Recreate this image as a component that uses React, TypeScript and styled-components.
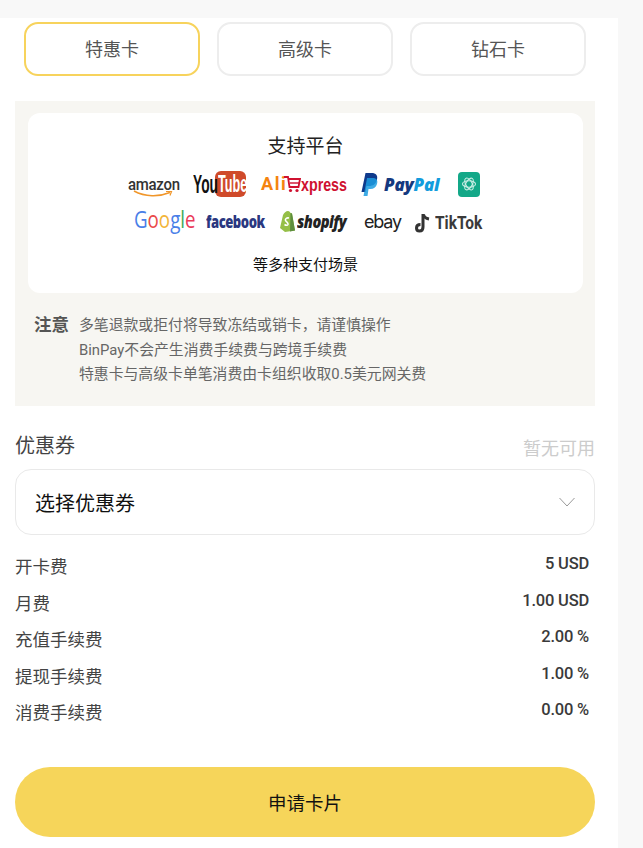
import React, { FC } from 'react';
import styled, { createGlobalStyle } from 'styled-components';

const cjk = '"Noto Sans CJK SC", "Noto Sans", sans-serif';

const GlobalStyle = createGlobalStyle`
    html, body {
        margin: 0;
        padding: 0;
        background: #f8f8f8;
        font-family: ${cjk};
    }
`;

const Page = styled.div`
    width: 618px;
    min-height: 848px;
    background: #fff;
`;

const TopBand = styled.div`
    width: 643px;
    height: 18px;
    background: #f8f8f8;
    overflow: hidden;
    text-align: center;
    padding-right: 18px;
    box-sizing: border-box;
`;

const TopTitle = styled.div`
    font-size: 18px;
    line-height: 24px;
    margin-top: -22px;
    color: #999;
`;

const Tabs = styled.div`
    display: flex;
    gap: 17px;
    padding: 4px 0 0 24px;
`;

const Tab = styled.div<{ $active?: boolean }>`
    width: 176px;
    height: 54px;
    box-sizing: border-box;
    padding-bottom: 2px;
    border: 2px solid ${p => (p.$active ? '#f7d35c' : '#ededed')};
    border-radius: 14px;
    display: flex;
    align-items: center;
    justify-content: center;
    font-size: 18px;
    color: #555;
`;

const Notice = styled.div`
    width: 580px;
    height: 305px;
    box-sizing: border-box;
    margin: 25px 0 0 15px;
    padding: 12px 12px 0 13px;
    background: #f7f6f2;
`;

const PlatformCard = styled.div`
    height: 180px;
    box-sizing: border-box;
    padding-top: 18px;
    background: #fff;
    border-radius: 12px;
    text-align: center;
`;

const PlatformTitle = styled.div`
    font-size: 19px;
    line-height: 28px;
    color: #222;
`;

const LogoRow = styled.div<{ $top: number; $shiftLeft?: number; $shiftRight?: number }>`
    display: flex;
    align-items: center;
    justify-content: center;
    height: 26px;
    margin-top: ${p => p.$top}px;
    padding-left: ${p => p.$shiftLeft ?? 0}px;
    padding-right: ${p => p.$shiftRight ?? 0}px;
`;

const Logo = styled.div<{ $left?: number; $width: number; $drop?: number }>`
    position: relative;
    display: flex;
    align-items: center;
    flex: none;
    width: ${p => p.$width}px;
    margin-left: ${p => p.$left ?? 0}px;
    margin-top: ${p => p.$drop ?? 0}px;
    white-space: nowrap;
    line-height: 1;
`;

// logo lettering is narrower than any installed face, so it gets squeezed
const Squeezed = styled.span<{ $x: number; $width: number }>`
    display: inline-block;
    flex: none;
    width: ${p => p.$width}px;
    transform: scaleX(${p => p.$x});
    transform-origin: left center;
`;

const AmazonText = styled.span`
    font-family: Roboto, sans-serif;
    font-size: 17px;
    font-weight: 500;
    letter-spacing: -0.3px;
    color: #333;
    margin-top: -5px;
`;

const Smile = styled.svg`
    position: absolute;
    left: 5px;
    top: 15px;
`;

const YouText = styled.span`
    font-family: "Liberation Sans", sans-serif;
    font-size: 25px;
    font-weight: 700;
    color: #111;
`;

const TubeBox = styled.span`
    display: flex;
    align-items: center;
    flex: none;
    padding-left: 3px;
    box-sizing: border-box;
    width: 31px;
    height: 26px;
    border-radius: 6px;
    background: #cf4a2a;
    color: #fff;
    font-family: "Liberation Sans", sans-serif;
    font-size: 23px;
    font-weight: 700;
    overflow: hidden;
`;

const AliText = styled.span`
    font-family: Roboto, sans-serif;
    font-size: 18px;
    font-weight: 700;
    letter-spacing: 1.6px;
    color: #f5840f;
    width: 23px;
`;

const XpressText = styled.span`
    font-family: "Liberation Sans", sans-serif;
    font-size: 19px;
    font-weight: 700;
    color: #cf1130;
`;

const PayText = styled.span<{ $light?: boolean }>`
    font-family: "Open Sans", sans-serif;
    font-size: 17px;
    font-weight: 800;
    font-style: italic;
    letter-spacing: -0.2px;
    color: ${p => (p.$light ? '#129cdd' : '#14397f')};
`;

const PayMark = styled.svg`
    margin-right: 6px;
`;

const GptBadge = styled.div`
    display: flex;
    align-items: center;
    justify-content: center;
    width: 22px;
    height: 25px;
    border-radius: 4px;
    background: #13a888;
`;

const GoogleLetter = styled.span<{ $color: string }>`
    font-family: "Open Sans", sans-serif;
    font-size: 24px;
    color: ${p => p.$color};
`;

const FacebookText = styled.span`
    font-family: "Open Sans", sans-serif;
    font-size: 17px;
    font-weight: 800;
    letter-spacing: -0.6px;
    color: #2a3780;
`;

const ShopifyText = styled.span`
    font-family: "Open Sans", sans-serif;
    font-size: 17px;
    font-weight: 800;
    font-style: italic;
    letter-spacing: -0.6px;
    color: #222;
`;

const EbayText = styled.span`
    font-family: Inter, sans-serif;
    font-size: 18px;
    letter-spacing: -1.2px;
    color: #222;
`;

const TikTokText = styled.span`
    font-family: Roboto, sans-serif;
    font-size: 18px;
    font-weight: 700;
    color: #3a3a3a;
`;

const ShopifyMark = styled.svg`
    margin-right: 2px;
    flex: none;
`;

const TikTokMark = styled.svg`
    margin-right: 5px;
    flex: none;
`;

const PlatformNote = styled.div`
    margin-top: 19px;
    font-size: 15px;
    line-height: 22px;
    color: #111;
`;

const NoteBlock = styled.div`
    display: flex;
    padding: 20px 0 0 6px;
`;

const NoteTitle = styled.div`
    width: 45px;
    flex: none;
    font-size: 17.5px;
    line-height: 22px;
    font-weight: 700;
    color: #555;
`;

const NoteLines = styled.div`
    font-family: Roboto, ${cjk};
    font-size: 14.85px;
    line-height: 24.5px;
    color: #666;
`;

const CouponHead = styled.div`
    display: flex;
    justify-content: space-between;
    align-items: flex-end;
    width: 580px;
    margin: 23px 0 0 15px;
    height: 30px;
`;

const CouponLabel = styled.div`
    font-size: 20px;
    line-height: 28px;
    color: #444;
`;

const CouponState = styled.div`
    font-size: 18px;
    line-height: 24px;
    color: #ccc;
`;

const CouponSelect = styled.div`
    display: flex;
    align-items: center;
    justify-content: space-between;
    width: 580px;
    height: 66px;
    box-sizing: border-box;
    margin: 10px 0 0 15px;
    padding: 0 19px 0 19px;
    border: 1px solid #e9e9e9;
    border-radius: 16px;
    font-size: 20px;
    color: #111;
`;

const FeeList = styled.div`
    width: 574px;
    margin: 14px 0 0 15px;
`;

const FeeRow = styled.div`
    display: flex;
    justify-content: space-between;
    height: 36.5px;
`;

const FeeLabel = styled.div`
    font-size: 17.5px;
    line-height: 34px;
    color: #444;
`;

const FeeValue = styled.div`
    font-family: Roboto, sans-serif;
    font-size: 16.5px;
    line-height: 30px;
    font-weight: 500;
    letter-spacing: -0.2px;
    color: #3a3a3a;
`;

const ApplyButton = styled.div`
    display: flex;
    align-items: center;
    justify-content: center;
    width: 580px;
    height: 70px;
    margin: 35px 0 0 15px;
    border-radius: 35px;
    background: #f6d55a;
    font-size: 18.5px;
    color: #111;
`;

const fees = [
    { label: '开卡费', value: '5 USD' },
    { label: '月费', value: '1.00 USD' },
    { label: '充值手续费', value: '2.00 %' },
    { label: '提现手续费', value: '1.00 %' },
    { label: '消费手续费', value: '0.00 %' },
];

const googleLetters = [
    ['G', '#4a7fe8'],
    ['o', '#ea4a4a'],
    ['o', '#f3b53a'],
    ['g', '#4a7fe8'],
    ['l', '#3fa95a'],
    ['e', '#ea3a5a'],
];

const PlatformLogos: FC = () => (
    <>
        <LogoRow $top={12} $shiftRight={3}>
            <Logo $width={52}>
                <Squeezed $x={0.88} $width={52}>
                    <AmazonText>amazon</AmazonText>
                </Squeezed>
                <Smile width="40" height="8" viewBox="0 0 40 8">
                    <path d="M1 1C12 7 26 7 37 2.5" fill="none" stroke="#f0962a" strokeWidth="1.6" />
                    <path d="M33 1.5L38.5 1.5L37 5.5" fill="none" stroke="#f0962a" strokeWidth="1.2" />
                </Smile>
            </Logo>
            <Logo $left={13} $width={53}>
                <Squeezed $x={0.55} $width={22}>
                    <YouText>You</YouText>
                </Squeezed>
                <TubeBox>
                    <Squeezed $x={0.55} $width={26}>Tube</Squeezed>
                </TubeBox>
            </Logo>
            <Logo $left={15} $width={87}>
                <AliText>Ali</AliText>
                <svg width="17" height="18" viewBox="0 0 17 18">
                    <path d="M0 2H4L5.5 12H14.5L16 4H5" fill="none" stroke="#cf1130" strokeWidth="1.8" />
                    <path d="M6 8H15" fill="none" stroke="#cf1130" strokeWidth="1.4" />
                    <circle cx="6.5" cy="15.5" r="1.6" fill="#cf1130" />
                    <circle cx="13" cy="15.5" r="1.6" fill="#cf1130" />
                </svg>
                <Squeezed $x={0.75} $width={47}>
                    <XpressText>xpress</XpressText>
                </Squeezed>
            </Logo>
            <Logo $left={13} $width={79}>
                <PayMark width="17" height="23" viewBox="0 0 17 23">
                    <path d="M4.5 0H10.5C15 0 17 2.5 16 6.5C15 11 12 13 8 13H5.5L4.5 19H0.5Z" fill="#0f3a8c" />
                    <path d="M6 5H12.5C16 5.5 17 8 16 11C15 14.5 12.5 16 9.5 16H7.5L6.5 23H2.5L5.5 8Z" fill="#1c9ce0" opacity="0.85" />
                </PayMark>
                <PayText>Pay</PayText>
                <PayText $light>Pal</PayText>
            </Logo>
            <Logo $left={18} $width={22}>
                <GptBadge>
                    <svg width="16" height="16" viewBox="0 0 16 16" fill="none" stroke="#cdeee6" strokeWidth="1.1">
                        <ellipse cx="8" cy="8" rx="6.5" ry="3.2" />
                        <ellipse cx="8" cy="8" rx="6.5" ry="3.2" transform="rotate(60 8 8)" />
                        <ellipse cx="8" cy="8" rx="6.5" ry="3.2" transform="rotate(120 8 8)" />
                    </svg>
                </GptBadge>
            </Logo>
        </LogoRow>
        <LogoRow $top={11} $shiftLeft={5}>
            <Logo $width={59} $drop={-5}>
                <Squeezed $x={0.78} $width={59}>
                    {googleLetters.map(([letter, color], i) => (
                        <GoogleLetter key={i} $color={color}>{letter}</GoogleLetter>
                    ))}
                </Squeezed>
            </Logo>
            <Logo $left={13} $width={59}>
                <Squeezed $x={0.77} $width={59}>
                    <FacebookText>facebook</FacebookText>
                </Squeezed>
            </Logo>
            <Logo $left={14} $width={67}>
                <ShopifyMark width="16" height="22" viewBox="0 0 16 22">
                    <path d="M1 18L4 5C5 3 7 1 9 1C10.5 1 11 2 11.5 3L13 3.5L16 20.5L6 22Z" fill="#95bf47" />
                    <path d="M13 3.5L16 20.5L11 21.5L11.5 3Z" fill="#5e8e3e" />
                    <path d="M10 8C7.5 7.5 6 9 6.5 10.5C7 12 9.5 12.5 9 14.5C8.5 15.5 7 15.5 5.5 14.5" fill="none" stroke="#fff" strokeWidth="1.6" />
                </ShopifyMark>
                <Squeezed $x={0.86} $width={49}>
                    <ShopifyText>shopify</ShopifyText>
                </Squeezed>
            </Logo>
            <Logo $left={18} $width={37} $drop={1}>
                <EbayText>ebay</EbayText>
            </Logo>
            <Logo $left={14} $width={67} $drop={4}>
                <TikTokMark width="15" height="20" viewBox="0 0 15 20">
                    <path d="M8 1V14C8 16.5 6.5 18 4.5 18C2.5 18 1.5 16.5 1.5 15C1.5 13 3 11.5 5.5 11.5" fill="none" stroke="#333" strokeWidth="3" />
                    <path d="M8.5 1.5C9 4 11 5.5 14 6" fill="none" stroke="#333" strokeWidth="3" />
                </TikTokMark>
                <Squeezed $x={0.86} $width={47}>
                    <TikTokText>TikTok</TikTokText>
                </Squeezed>
            </Logo>
        </LogoRow>
    </>
);

const App: FC = () => (
    <Page>
        <GlobalStyle />
        <TopBand>
            <TopTitle>选择卡片类型</TopTitle>
        </TopBand>
        <Tabs>
            <Tab $active>特惠卡</Tab>
            <Tab>高级卡</Tab>
            <Tab>钻石卡</Tab>
        </Tabs>
        <Notice>
            <PlatformCard>
                <PlatformTitle>支持平台</PlatformTitle>
                <PlatformLogos />
                <PlatformNote>等多种支付场景</PlatformNote>
            </PlatformCard>
            <NoteBlock>
                <NoteTitle>注意</NoteTitle>
                <NoteLines>
                    <div>多笔退款或拒付将导致冻结或销卡，请谨慎操作</div>
                    <div>BinPay不会产生消费手续费与跨境手续费</div>
                    <div>特惠卡与高级卡单笔消费由卡组织收取0.5美元网关费</div>
                </NoteLines>
            </NoteBlock>
        </Notice>
        <CouponHead>
            <CouponLabel>优惠券</CouponLabel>
            <CouponState>暂无可用</CouponState>
        </CouponHead>
        <CouponSelect>
            <span>选择优惠券</span>
            <svg width="16" height="10" viewBox="0 0 16 10">
                <path d="M0.5 1L8 9L15.5 1" fill="none" stroke="#999" strokeWidth="1" />
            </svg>
        </CouponSelect>
        <FeeList>
            {fees.map(fee => (
                <FeeRow key={fee.label}>
                    <FeeLabel>{fee.label}</FeeLabel>
                    <FeeValue>{fee.value}</FeeValue>
                </FeeRow>
            ))}
        </FeeList>
        <ApplyButton>申请卡片</ApplyButton>
    </Page>
);

export default App;
